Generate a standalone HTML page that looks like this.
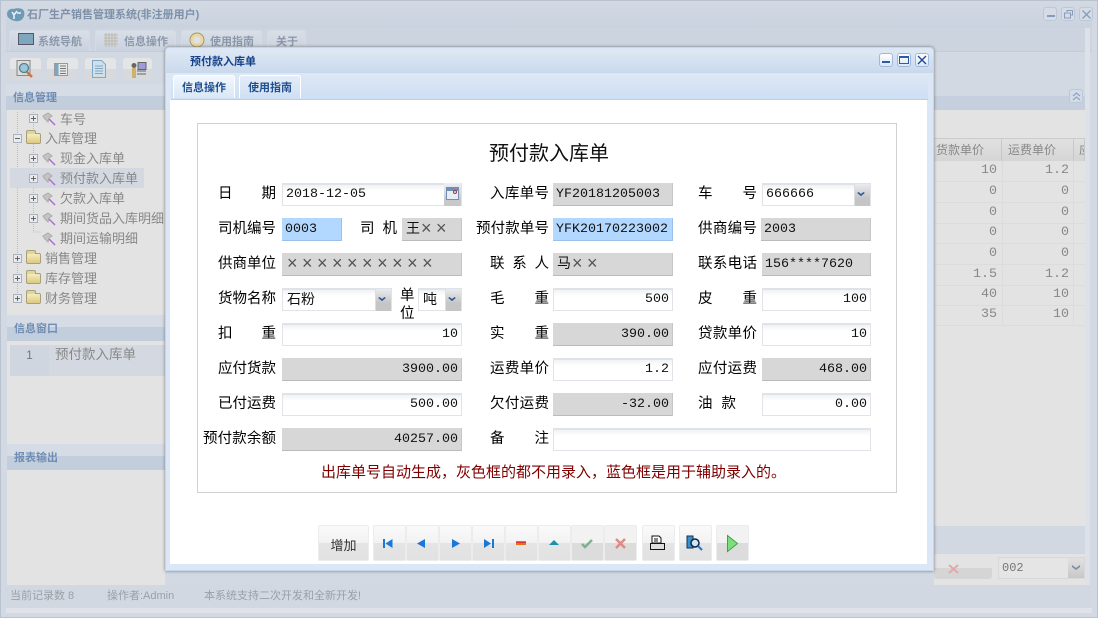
<!DOCTYPE html>
<html lang="zh"><head><meta charset="utf-8"><title>预付款入库单</title>
<style>
html,body{margin:0;padding:0;width:1098px;height:618px;overflow:hidden;background:#d3dae4}
body{position:relative;font-family:"Liberation Sans","WenQuanYi Zen Hei","Noto Sans CJK SC",sans-serif;font-size:13px;color:#777}
div,span{position:absolute;white-space:nowrap;box-sizing:border-box}
svg{position:absolute;overflow:visible}
i{font-style:normal;font-size:18px;letter-spacing:4.5px;line-height:0;font-family:"Liberation Sans",sans-serif;color:#555;position:relative;top:1px;left:1px}
.tab{top:30px;height:21px;background:linear-gradient(#d9dfe7,#c9d2df);border:1px solid #d5dbe4;border-bottom:0;border-radius:3px 3px 0 0;font-size:11px;color:#8b98ab;font-weight:bold;line-height:23px}
.tb{top:58px;height:22px;width:31px;background:linear-gradient(#e4e5e6 50%,#d7d9dc 50%);border-radius:3px}
.ph{height:26px;background:linear-gradient(#d6dce5 46%,#c3cedd 46%);color:#6f8db4;font-weight:bold;font-size:11px;line-height:17px;padding:6px 0 0 7px}
.t{color:#888;font-size:13px;line-height:20px}
.pm{width:9px;height:9px;border:1px solid #a9b1bd;background:#e9ebef}
.pm:before{content:"";position:absolute;left:1px;top:3px;width:5px;height:1px;background:#666}
.pl:after{content:"";position:absolute;left:3px;top:1px;width:1px;height:5px;background:#666}
.fo{width:15px;height:11px;background:linear-gradient(#f5edbd,#dcc983);border:1px solid #a8a079;border-radius:2px}
.fo:before{content:"";position:absolute;left:-1px;top:-4px;width:8px;height:3px;background:#e3d597;border:1px solid #a8a079;border-bottom:0;border-radius:2px 2px 0 0}
.th{top:138px;height:23px;background:linear-gradient(#e1e1e1,#d5d5d5);border-right:1px solid #c8c8c8;border-top:1px solid #ccc;color:#888;font-size:12px;line-height:23px;padding-left:6px}
.c{color:#888;font-family:"Liberation Mono",monospace;font-size:13.33px;text-align:right;height:20px;line-height:20px}
.wb{top:7px;width:14px;height:14px;background:#d4dce7;border:1px solid #bcc8d8;border-radius:3px}
#dlg{left:165px;top:47px;width:769px;height:524px;background:#dbe7f6;border:1px solid #c5d5ea;border-radius:4px 4px 0 0;box-shadow:0 0 3px rgba(90,90,90,.75)}
.dbtn{top:5px;width:14px;height:14px;background:linear-gradient(#fff,#dbe7f6);border:1px solid #9fb9dc;border-radius:3px}
.dtab{top:27px;height:23px;border:1px solid #fff;border-bottom:0;border-radius:3px 3px 0 0;font-size:11px;font-weight:bold;color:#21508f;line-height:24px;text-align:center}
.l{color:#000;font-size:14.5px;line-height:23px;height:23px;text-align:justify;text-align-last:justify}
.i{height:23px;font-family:"Liberation Mono",monospace;font-size:13.33px;line-height:20px;padding:0 3px;color:#111;border:1px solid #e1e3e8;border-top:2px solid #dfe2e8;background:linear-gradient(#f1f2f4,#fff 6px)}
.g{background:#d7d7d7;border:0;border-right:1px solid #c6c6c6;border-bottom:1px solid #bbb;line-height:24px}
.b{background:#b2d8ff;border:0;border-right:1px solid #9cc0e6;border-bottom:1px solid #9cc0e6;line-height:24px}
.r{text-align:right}
.cj{font-family:"Liberation Sans","WenQuanYi Zen Hei","Noto Sans CJK SC",sans-serif;font-size:14px;line-height:18px;padding-left:4px}
.cj.g{line-height:20px}
.dd{right:0;top:-1px;width:16px;height:22px;background:linear-gradient(#e9ebef,#c5c5c5 65%);border-left:1px solid #ddd}
.dd:after{content:"";position:absolute;left:3px;top:6px;width:6px;height:6px;box-sizing:border-box;border:solid #2f5597;border-width:0 2px 2px 0;transform:scale(.9,.7) rotate(45deg)}
.btn{top:525px;width:33px;height:36px;background:linear-gradient(#fafafa,#f2f2f2 50%,#e4e4e4 50%,#e2e2e2);border:1px solid #ececec;border-radius:2px}
</style></head><body>

<!-- main window -->
<div style="left:0;top:0;width:1098px;height:618px;background:#d2d9e3;border:1px solid #b9c3d0"></div>
<div style="left:6px;top:4px;width:1086px;height:24px;background:linear-gradient(#d2d9e3,#c9d2de)"></div>
<svg style="left:6px;top:7px" width="20" height="16" viewBox="0 0 20 16"><path d="M1 7C1 3 5 1 8 2c1-1 6-1 8 0 2 1 3 4 2 7-1 4-5 6-9 5C5 13 1 11 1 7z" fill="#6d9ab5"/><path d="M6 5l2 3 3-4M8 8v4M11 6h4" stroke="#eef3f7" stroke-width="1.5" fill="none"/></svg>
<div style="left:27px;top:7px;font-size:11px;font-weight:bold;color:#7e90a8;line-height:16px">石厂生产销售管理系统(非注册用户)</div>
<div class="wb" style="left:1043px"><svg style="left:3px;top:7px" width="8" height="2"><rect width="8" height="2" fill="#8a9bb8"/></svg></div>
<div class="wb" style="left:1061px"><svg style="left:2px;top:2px" width="9" height="9"><path d="M3 2V.5h5.500V5H7M.5 3h6v5h-6z" fill="none" stroke="#8a9bb8"/></svg></div>
<div class="wb" style="left:1079px"><svg style="left:2px;top:2px" width="9" height="9"><path d="M.5.500l8 8M8.500.500l-8 8" stroke="#8a9bb8" stroke-width="1.300"/></svg></div>

<div style="left:6px;top:28px;width:1086px;height:24px;background:#ccd4e0;border-bottom:1px solid #c1cddf"></div>
<div class="tab" style="left:9px;width:81px;padding-left:28px">系统导航</div>
<svg style="left:18px;top:33px" width="16" height="13"><rect x=".5" y=".5" width="15" height="11" fill="#7fa6bf" stroke="#556"/></svg>
<div class="tab" style="left:95px;width:81px;padding-left:28px">信息操作</div>
<svg style="left:104px;top:33px" width="14" height="14"><path d="M2 0v14M5 0v14M8 0v14M11 0v14M0 2h14M0 5h14M0 8h14M0 11h14" stroke="#bdb8aa" stroke-width="1"/></svg>
<div class="tab" style="left:181px;width:81px;padding-left:28px">使用指南</div>
<svg style="left:189px;top:33px" width="16" height="14"><circle cx="8" cy="7" r="7" fill="#e8d9a3" stroke="#a89566"/><circle cx="8" cy="7" r="3.500" fill="#dde2ea"/></svg>
<div class="tab" style="left:267px;width:39px;padding-left:8px">关于</div>

<div style="left:6px;top:52px;width:1086px;height:32px;background:#d2d9e3"></div>
<div class="tb" style="left:10px"></div><div class="tb" style="left:47px"></div><div class="tb" style="left:85px"></div><div class="tb" style="left:123px;width:29px"></div>
<svg style="left:16px;top:60px" width="18" height="19"><rect x="1" y="0.500" width="13" height="15" fill="#ddd" stroke="#888"/><circle cx="8" cy="8" r="4.500" fill="#9fc6d6" stroke="#4e7f93" stroke-width="1.300"/><path d="M11 12l5 5" stroke="#c9744c" stroke-width="2.500"/></svg>
<svg style="left:54px;top:63px" width="14" height="13"><rect x=".5" y=".5" width="13" height="12" fill="#e8e8e8" stroke="#999"/><rect x="1" y="1" width="3.500" height="11" fill="#7ca6c4"/><path d="M6 3h6M6 5.500h6M6 8h6M6 10.500h6" stroke="#777"/></svg>
<svg style="left:92px;top:60px" width="14" height="18"><path d="M.5.500h9l4 4v13H.5z" fill="#cfe0ea" stroke="#7fa8c6"/><path d="M3 6h8M3 8.500h8M3 11h8M3 13.500h8" stroke="#7fa8c6"/></svg>
<svg style="left:129px;top:62px" width="18" height="17"><rect x="9" y="0.500" width="8" height="7" fill="#9d9bd8" stroke="#666"/><circle cx="5" cy="3.500" r="2.500" fill="#666"/><rect x="3" y="6" width="4" height="10" fill="#cdb26a"/><path d="M8 9h9M8 12h9" stroke="#666"/></svg>

<!-- left pane -->
<div style="left:7px;top:84px;width:158px;height:501px;background:#e3e3e3"></div>
<div class="ph" style="left:6px;top:84px;width:160px">信息管理</div>
<svg style="left:17px;top:112px" width="20" height="190"><path d="M.5 0v186M.5 26h3M.5 146h3M.5 166h3M.5 186h3M16.500 0v120M16.500 120h7" stroke="#bbb" stroke-dasharray="1 1" fill="none"/></svg>
<div style="left:10px;top:168px;width:134px;height:20px;background:#d3d8e1"></div>
<div class="pm pl" style="left:29px;top:114px"></div><div class="t" style="left:60px;top:110px">车号</div>
<div class="pm" style="left:13px;top:134px"></div><div class="fo" style="left:26px;top:133px"></div><div class="t" style="left:45px;top:129px">入库管理</div>
<div class="pm pl" style="left:29px;top:154px"></div><div class="t" style="left:60px;top:149px">现金入库单</div>
<div class="pm pl" style="left:29px;top:174px"></div><div class="t" style="left:60px;top:169px">预付款入库单</div>
<div class="pm pl" style="left:29px;top:194px"></div><div class="t" style="left:60px;top:189px">欠款入库单</div>
<div class="pm pl" style="left:29px;top:214px"></div><div class="t" style="left:60px;top:209px">期间货品入库明细</div>
<div class="t" style="left:60px;top:229px">期间运输明细</div>
<svg style="left:42px;top:112px" width="16" height="130"><g id="w" fill="none"><path d="M1 4l5-3 4 3-3 2-1 4-3-3z" fill="#c4c4c4" stroke="#aaa"/><path d="M7 7l6 6" stroke="#b06cd0" stroke-width="1.500"/></g><use href="#w" y="40"/><use href="#w" y="60"/><use href="#w" y="80"/><use href="#w" y="100"/><use href="#w" y="120"/></svg>
<div class="pm pl" style="left:13px;top:254px"></div><div class="fo" style="left:26px;top:253px"></div><div class="t" style="left:45px;top:249px">销售管理</div>
<div class="pm pl" style="left:13px;top:274px"></div><div class="fo" style="left:26px;top:273px"></div><div class="t" style="left:45px;top:269px">库存管理</div>
<div class="pm pl" style="left:13px;top:294px"></div><div class="fo" style="left:26px;top:293px"></div><div class="t" style="left:45px;top:289px">财务管理</div>

<div class="ph" style="left:7px;top:315px;width:158px;padding-top:6px">信息窗口</div>
<div style="left:10px;top:345px;width:155px;height:31px;background:#d3d8e1"></div>
<div style="left:10px;top:345px;width:39px;height:31px;background:#d0d6e0;color:#777;font-size:12px;text-align:center;line-height:20px">1</div>
<div class="t" style="left:55px;top:345px;font-size:13.500px">预付款入库单</div>
<div class="ph" style="left:7px;top:444px;width:158px;padding-top:6px">报表输出</div>

<!-- right pane -->
<div style="left:934px;top:84px;width:151px;height:26px;background:linear-gradient(#d1d9e3 46%,#c5cfdd 46%)"></div>
<div class="wb" style="left:1069px;top:89px"><svg style="left:2px;top:2px" width="9" height="9"><path d="M1 4l3.500-3L8 4M1 8l3.500-3L8 8" fill="none" stroke="#8ba6c6" stroke-width="1.200"/></svg></div>
<div style="left:934px;top:110px;width:151px;height:416px;background:#e3e3e3"></div>
<div style="left:1085px;top:28px;width:5px;height:557px;background:#dde2e9"></div>
<div class="th" style="left:934px;width:68px;padding-left:2px">货款单价</div>
<div class="th" style="left:1002px;width:72px">运费单价</div>
<div class="th" style="left:1074px;width:11px;padding-left:5px;overflow:hidden">应</div>
<div class="c" style="left:934px;top:161px;width:63px">10</div><div class="c" style="left:1002px;top:161px;width:67px">1.2</div>
<div class="c" style="left:934px;top:182px;width:63px">0</div><div class="c" style="left:1002px;top:182px;width:67px">0</div>
<div class="c" style="left:934px;top:203px;width:63px">0</div><div class="c" style="left:1002px;top:203px;width:67px">0</div>
<div class="c" style="left:934px;top:223px;width:63px">0</div><div class="c" style="left:1002px;top:223px;width:67px">0</div>
<div class="c" style="left:934px;top:244px;width:63px">0</div><div class="c" style="left:1002px;top:244px;width:67px">0</div>
<div class="c" style="left:934px;top:265px;width:63px">1.5</div><div class="c" style="left:1002px;top:265px;width:67px">1.2</div>
<div class="c" style="left:934px;top:285px;width:63px">40</div><div class="c" style="left:1002px;top:285px;width:67px">10</div>
<div class="c" style="left:934px;top:305px;width:63px">35</div><div class="c" style="left:1002px;top:305px;width:67px">10</div>
<svg style="left:1002px;top:161px" width="84" height="165"><path d="M.5 0v165M71.500 0v165M-70 20.500h153M-70 41.500h153M-70 62.500h153M-70 82.500h153M-70 103.500h153M-70 124.500h153M-70 144.500h153M-70 164.500h153" stroke="#dcdcdc"/></svg>
<div style="left:934px;top:526px;width:151px;height:28px;background:#d2d8e1"></div>
<div style="left:934px;top:554px;width:151px;height:31px;background:#e3e3e3"></div>
<div style="left:934px;top:557px;width:58px;height:22px;background:linear-gradient(#e3e3e3 50%,#d5d5d5 50%);border-radius:3px"></div>
<svg style="left:948px;top:564px" width="11" height="10"><path d="M1 1l9 8M10 1l-9 8" stroke="#e3a8a8" stroke-width="2"/></svg>
<div style="left:998px;top:557px;width:87px;height:22px;background:#e5e5e5;border:1px solid #d8d8d8;font-family:'Liberation Mono',monospace;font-size:12px;line-height:21px;padding-left:3px;color:#777">002<div style="right:0;top:0;width:16px;height:20px;background:linear-gradient(#e1e1e1,#c8c8c8)"></div><svg style="right:3px;top:6px;width:10px" width="10" height="7"><path d="M1 1l4 3 4-3v2l-4 3-4-3z" fill="#7d89a6"/></svg></div>

<!-- status bar -->
<div style="left:6px;top:585px;width:1084px;height:23px;background:#d2d8e1"></div>
<div style="left:10px;top:588px;font-size:11px;color:#9a9fa7;line-height:16px">当前记录数 8</div>
<div style="left:107px;top:588px;font-size:11px;color:#9a9fa7;line-height:16px">操作者:Admin</div>
<div style="left:204px;top:588px;font-size:11px;color:#9a9fa7;line-height:16px">本系统支持二次开发和全新开发!</div>
<div style="left:6px;top:608px;width:1086px;height:5px;background:#dfe3e9"></div>

<!-- dialog -->
<div id="dlg">
 <div style="left:0;top:2px;width:767px;height:23px;background:linear-gradient(#dfe8f4,#c9d9ec)"></div>
 <div style="left:24px;top:6px;font-size:11px;font-weight:bold;color:#15428b;line-height:17px">预付款入库单</div>
 <div class="dbtn" style="left:713px"><svg style="left:2px;top:7px" width="8" height="2"><rect width="8" height="2" fill="#2f5aa8"/></svg></div>
 <div class="dbtn" style="left:731px"><svg style="left:1px;top:2px" width="10" height="8"><rect x=".5" y="1" width="9" height="6.500" fill="none" stroke="#2f5aa8"/><rect width="10" height="2" fill="#2f5aa8"/></svg></div>
 <div class="dbtn" style="left:749px"><svg style="left:1px;top:1px" width="10" height="10"><path d="M1 1l8 8M9 1l-8 8" stroke="#23488f" stroke-width="1.400"/></svg></div>
 <div style="left:5px;top:25px;width:757px;height:27px;background:linear-gradient(#dfe8f5,#cddff3);border-bottom:1px solid #b9d0ec"></div>
 <div class="dtab" style="left:7px;width:62px;background:linear-gradient(#f2f7fd,#d9e7f7)">信息操作</div>
 <div class="dtab" style="left:73px;width:62px;background:linear-gradient(#e4edf8,#cfe0f4)">使用指南</div>
 <div style="left:4px;top:52px;width:757px;height:464px;background:#fff"></div>
</div>

<!-- form -->
<div style="left:197px;top:123px;width:700px;height:370px;background:#fff;border:1px solid #d0d0d0"></div>
<div style="left:489px;top:140px;font-size:20px;color:#111;line-height:28px">预付款入库单</div>

<div class="l" style="left:218px;top:183px;width:58px">日 期</div>
<div class="i" style="left:282px;top:183px;width:180px">2018-12-05<div style="right:0;top:-2px;width:17px;height:23px;background:linear-gradient(#eef0f4,#c8c8c8 70%)"></div><svg style="left:163px;top:2px" width="13" height="13"><rect x=".5" y=".5" width="12" height="12" fill="#e8eef6" stroke="#6f8fb6"/><rect x="1" y="1" width="11" height="3" fill="#6f8fb6"/><circle cx="9" cy="5" r="1.500" fill="none" stroke="#a33"/></svg></div>
<div class="l" style="left:490px;top:183px;width:59px">入库单号</div>
<div class="i g" style="left:553px;top:183px;width:120px">YF20181205003</div>
<div class="l" style="left:698px;top:183px;width:59px">车 号</div>
<div class="i" style="left:762px;top:183px;width:109px">666666<div class="dd"></div></div>

<div class="l" style="left:218px;top:218px;width:58px">司机编号</div>
<div class="i b" style="left:282px;top:218px;width:60px">0003</div>
<div class="l" style="left:360px;top:218px;width:37px">司 机</div>
<div class="i g cj" style="left:402px;top:218px;width:60px">王<i>××</i></div>
<div class="l" style="left:476px;top:218px;width:73px">预付款单号</div>
<div class="i b" style="left:553px;top:218px;width:120px">YFK20170223002</div>
<div class="l" style="left:698px;top:218px;width:59px">供商编号</div>
<div class="i g" style="left:761px;top:218px;width:110px">2003</div>

<div class="l" style="left:218px;top:253px;width:58px">供商单位</div>
<div class="i g cj" style="left:282px;top:253px;width:180px"><i>××××××××××</i></div>
<div class="l" style="left:490px;top:253px;width:59px">联 系 人</div>
<div class="i g cj" style="left:553px;top:253px;width:120px">马<i>××</i></div>
<div class="l" style="left:698px;top:253px;width:59px">联系电话</div>
<div class="i g" style="left:762px;top:253px;width:109px">156****7620</div>

<div class="l" style="left:218px;top:288px;width:58px">货物名称</div>
<div class="i cj" style="left:282px;top:288px;width:110px">石粉<div class="dd"></div></div>
<div style="left:400px;top:287px;width:15px;font-size:14.5px;line-height:18px;color:#000;white-space:normal">单位</div>
<div class="i cj" style="left:418px;top:288px;width:44px">吨<div class="dd"></div></div>
<div class="l" style="left:490px;top:288px;width:59px">毛 重</div>
<div class="i r" style="left:553px;top:288px;width:120px">500</div>
<div class="l" style="left:698px;top:288px;width:59px">皮 重</div>
<div class="i r" style="left:762px;top:288px;width:109px">100</div>

<div class="l" style="left:218px;top:323px;width:58px">扣 重</div>
<div class="i r" style="left:282px;top:323px;width:180px">10</div>
<div class="l" style="left:490px;top:323px;width:59px">实 重</div>
<div class="i g r" style="left:553px;top:323px;width:120px">390.00</div>
<div class="l" style="left:698px;top:323px;width:59px">贷款单价</div>
<div class="i r" style="left:762px;top:323px;width:109px">10</div>

<div class="l" style="left:218px;top:358px;width:58px">应付货款</div>
<div class="i g r" style="left:282px;top:358px;width:180px">3900.00</div>
<div class="l" style="left:490px;top:358px;width:59px">运费单价</div>
<div class="i r" style="left:553px;top:358px;width:120px">1.2</div>
<div class="l" style="left:698px;top:358px;width:59px">应付运费</div>
<div class="i g r" style="left:762px;top:358px;width:109px">468.00</div>

<div class="l" style="left:218px;top:393px;width:58px">已付运费</div>
<div class="i r" style="left:282px;top:393px;width:180px">500.00</div>
<div class="l" style="left:490px;top:393px;width:59px">欠付运费</div>
<div class="i g r" style="left:553px;top:393px;width:120px">-32.00</div>
<div class="l" style="left:698px;top:393px;width:38px">油 款</div>
<div class="i r" style="left:762px;top:393px;width:109px">0.00</div>

<div class="l" style="left:203px;top:428px;width:73px">预付款余额</div>
<div class="i g r" style="left:282px;top:428px;width:180px">40257.00</div>
<div class="l" style="left:490px;top:428px;width:59px">备 注</div>
<div class="i" style="left:553px;top:428px;width:318px"></div>

<div style="left:321px;top:463px;font-size:15px;color:#800000;line-height:20px">出库单号自动生成，灰色框的都不用录入，蓝色框是用于辅助录入的。</div>

<!-- buttons -->
<div class="btn" style="left:318px;width:51px;color:#333;font-size:13px;line-height:39px;text-align:center">增加</div>
<div class="btn" style="left:373px"></div><div class="btn" style="left:406px"></div><div class="btn" style="left:439px"></div><div class="btn" style="left:472px"></div>
<div class="btn" style="left:505px"></div><div class="btn" style="left:538px"></div>
<div class="btn" style="left:571px;background:linear-gradient(#f2f2f2 50%,#dcdcdc 50%)"></div><div class="btn" style="left:604px;background:linear-gradient(#f2f2f2 50%,#dcdcdc 50%)"></div>
<div class="btn" style="left:642px"></div><div class="btn" style="left:679px"></div><div class="btn" style="left:716px;background:linear-gradient(#f2f2f2 50%,#dcdcdc 50%)"></div>
<svg style="left:0;top:0" width="1098" height="618">
 <path d="M383 539h2v9h-2zM385.500 543.500l7-4.500v9z" fill="#1a78d8"/>
 <path d="M417 543.500l8-4.500v9z" fill="#1a78d8"/>
 <path d="M460 543.500l-8-4.500v9z" fill="#1a78d8"/>
 <path d="M494 539h-2v9h2zM491 543.500l-7-4.500v9z" fill="#1a78d8"/>
 <path d="M516 541h10v4h-10z" fill="#e8701a"/><path d="M516 542.500h10" stroke="#d33" stroke-width="1"/>
 <path d="M549 545l5-5 5 5z" fill="#1a93a8"/>
 <path d="M582 544l3 3 7-7" fill="none" stroke="#7fb08f" stroke-width="2.500"/>
 <path d="M616 539l9 9M625 539l-9 9" stroke="#e08a85" stroke-width="2.500"/>
 <path d="M652 536h7l2 2v5h-9z" fill="#fff" stroke="#111"/><path d="M650.500 543.500h14v6h-14z" fill="#ddd" stroke="#111"/><path d="M654 539h4M654 541h4" stroke="#111"/>
 <path d="M687 536h6v12h-6z" fill="#3a8fc8" stroke="#135"/><circle cx="695" cy="543" r="4" fill="#cfe6f4" stroke="#124" stroke-width="1.500"/><path d="M698 546l4 4" stroke="#1a78d8" stroke-width="2"/>
 <path d="M727.500 535.500l10 8-10 8z" fill="#7ae07a" stroke="#4d9a4d"/>
</svg>
</body></html>
